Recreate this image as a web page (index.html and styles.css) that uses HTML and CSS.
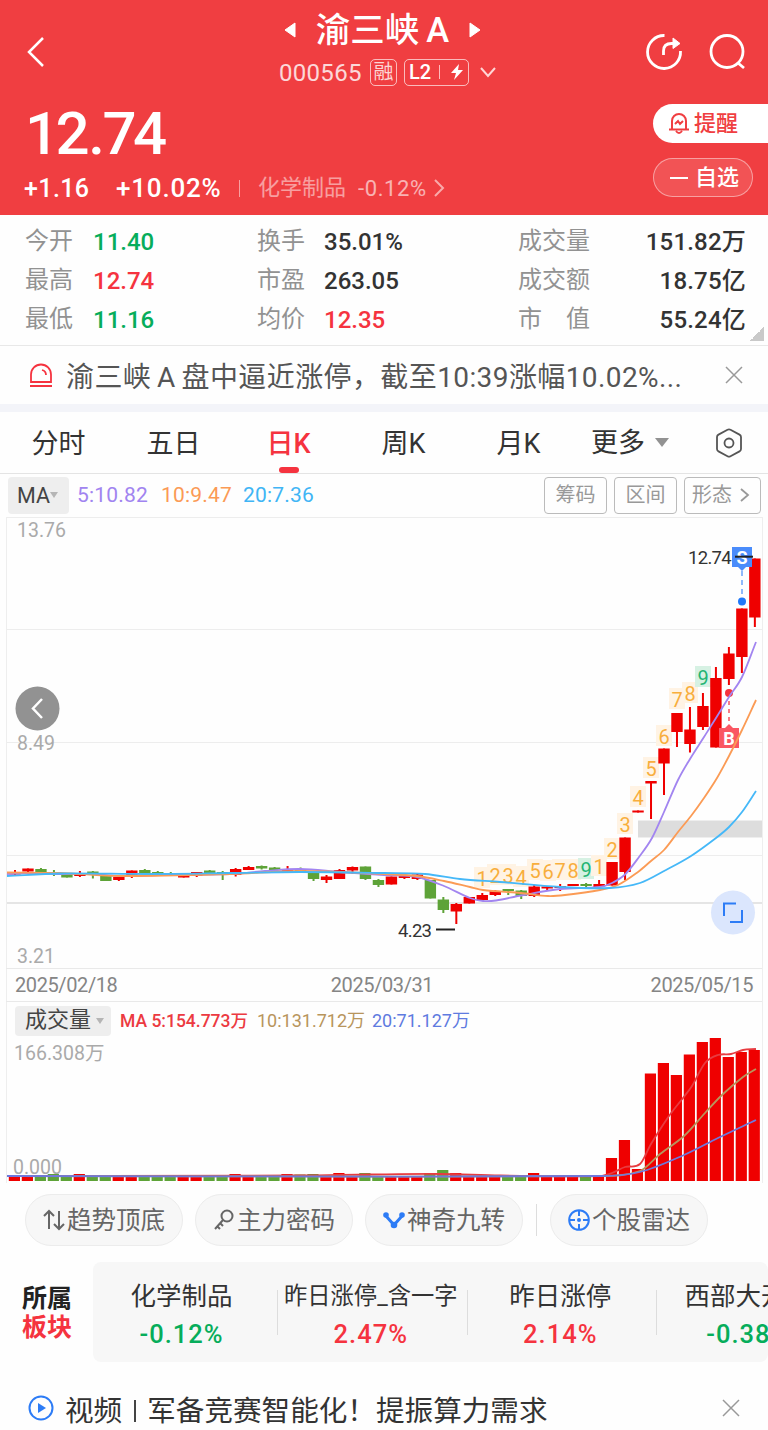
FILE: index.html
```html
<!doctype html>
<html lang="zh-CN">
<head>
    <meta charset="UTF-8">
    <title>渝三峡A 000565</title>
    <meta name="viewport" content="width=device-width, initial-scale=1">
    <link rel="stylesheet" href="styles.css">
</head>
<body>
    <header class="header">
        <div class="title-bar">
            <svg class="back" width="20" height="32" viewBox="0 0 20 32"><path d="M17 2 3 16l14 14"/></svg>
            <div class="title">
                <div class="name-row">
                    <svg width="12" height="16" viewBox="0 0 12 16"><path d="M11 1v14L1 8z"/></svg>
                    <h1>渝三峡<span>A</span></h1>
                    <svg width="12" height="16" viewBox="0 0 12 16"><path d="M1 1v14l10-7z"/></svg>
                </div>
                <div class="code-row">
                    <span class="code">000565</span>
                    <span class="badge rong">融</span>
                    <span class="badge level">L2<i></i><svg width="14" height="18" viewBox="0 0 14 18"><path d="M9 1 1 10h5l-2 7 9-10H8z"/></svg></span>
                    <svg class="down" width="16" height="12" viewBox="0 0 16 12"><path d="m1 2 7 8 7-8"/></svg>
                </div>
            </div>
            <div class="actions">
                <svg width="38" height="38" viewBox="0 0 38 38"><path d="M19.500 2.500A16.500 16.500 0 1 0 35.500 18"/><path d="M18.500 22v-4q0-7.500 8-7.500h5"/><path class="head" d="m28 5 7 5.500-7 5z"/></svg>
                <svg width="38" height="38" viewBox="0 0 38 38"><circle cx="19" cy="18.500" r="16"/><path d="m30 30 6 5"/></svg>
            </div>
        </div>
        <div class="quote">
            <div class="price-box">
                <div class="price">12<span>.</span>74</div>
                <div class="change">
                    <span>+1.16</span><span class="rate">+10.02%</span><i></i>
                    <span class="sector">化学制品</span><span class="sector-rate">-0.12%</span>
                    <svg width="12" height="18" viewBox="0 0 12 18"><path d="m2 1 8 8-8 8"/></svg>
                </div>
            </div>
            <div class="side">
                <div class="remind">
                    <svg width="22" height="23" viewBox="0 0 22 23"><path d="M4 17V9a7 7 0 0 1 14 0v8M1 17.500h20M8 19q3 4 6 0M7 12l3-3 2 3 3-3"/></svg><span>提醒</span>
                </div>
                <div class="watch"><i></i><span>自选</span></div>
            </div>
        </div>
    </header>

    <section class="stats">
        <span>今开</span><b class="green">11.40</b><span>换手</span><b>35.01%</b><span>成交量</span><b>151.82万</b>
        <span>最高</span><b class="red">12.74</b><span>市盈</span><b>263.05</b><span>成交额</span><b>18.75亿</b>
        <span>最低</span><b class="green">11.16</b><span>均价</span><b class="red">12.35</b><span>市　值</span><b>55.24亿</b>
        <i class="corner"></i>
    </section>

    <div class="notice">
        <svg width="24" height="25" viewBox="0 0 24 25"><path d="M2 19v-7.500a10 10 0 0 1 20 0V19zM1 23h22M13 7q4 1 4 5"/></svg>
        <p>渝三峡 A 盘中逼近涨停，截至10:39涨幅10.02%...</p>
        <svg class="close" width="18" height="18" viewBox="0 0 18 18"><path d="m1 1 16 16M17 1 1 17"/></svg>
    </div>

    <nav class="tabs">
        <a>分时</a><a>五日</a><a class="active">日K</a><a>周K</a><a>月K</a>
        <a class="more">更多<i></i></a>
        <svg width="28" height="30" viewBox="0 0 28 30"><path d="M12.500 1.800q1.500-.8 3 0l9 4.800q1.500.8 1.500 2.400v12q0 1.600-1.500 2.400l-9 4.800q-1.500.8-3 0l-9-4.800Q2 22.600 2 21V9q0-1.600 1.500-2.400z"/><circle cx="14" cy="15" r="4.500"/></svg>
    </nav>

    <div class="toolbar">
        <span class="select">MA<i></i></span>
        <span class="ma5">5:10.82</span><span class="ma10">10:9.47</span><span class="ma20">20:7.36</span>
        <div class="tools">
            <span>筹码</span><span>区间</span><span class="shape">形态<svg width="10" height="16" viewBox="0 0 10 16"><path d="m1 2 7 6-7 6"/></svg></span>
        </div>
    </div>

    <div class="charts">
        <svg id="kline" width="768" height="452" viewBox="0 516 768 452"></svg>
        <div class="dates"><span>2025/02/18</span><span>2025/03/31</span><span>2025/05/15</span></div>
        <div class="vol-head">
            <span class="select"><span>成交量</span><i></i></span>
            <span class="v5">MA 5:154.773万</span><span class="v10">10:131.712万</span><span class="v20">20:71.127万</span>
        </div>
        <svg id="volume" width="768" height="146" viewBox="0 1036 768 146"></svg>
    </div>

    <div class="pills">
        <div><svg width="22" height="24" viewBox="0 0 22 24"><path d="M6 21V3M1 8l5-5 5 5M16 3v18M11 16l5 5 5-5"/></svg><span>趋势顶底</span></div>
        <div><svg width="22" height="24" viewBox="0 0 22 24"><circle cx="14" cy="8" r="5.500"/><path d="M10 12 2 21M7 15l3 3M4 18l3 3"/></svg><span>主力密码</span></div>
        <div><svg class="blue" width="22" height="24" viewBox="0 0 22 24"><path class="thick" d="m3 8 8 9 8-9"/><circle class="dot" cx="3" cy="7" r="2.800"/><circle class="dot" cx="11" cy="17" r="3.300"/><circle class="dot" cx="19" cy="7" r="2.800"/></svg><span>神奇九转</span></div>
        <i></i>
        <div><svg class="blue" width="22" height="24" viewBox="0 0 22 24"><circle cx="11" cy="12" r="9.800"/><path d="M11 2v6M11 16v6M1 12h6M15 12h6"/><circle class="dot" cx="11" cy="12" r="2"/></svg><span>个股雷达</span></div>
    </div>

    <section class="sectors">
        <h2>所属<br><em>板块</em></h2>
        <div class="sector-list">
            <div><span>化学制品</span><b class="green">-0.12%</b></div>
            <div><span class="long">昨日涨停_含一字</span><b class="red">2.47%</b></div>
            <div><span>昨日涨停</span><b class="red">2.14%</b></div>
            <div><span>西部大开发</span><b class="green">-0.38%</b></div>
        </div>
    </section>

    <div class="video">
        <svg width="26" height="26" viewBox="0 0 26 26"><circle cx="13" cy="13" r="11.500"/><path d="M10 8v10l8-5z"/></svg>
        <p>视频<i></i>军备竞赛智能化！提振算力需求</p>
        <svg class="close" width="18" height="18" viewBox="0 0 18 18"><path d="m1 1 16 16M17 1 1 17"/></svg>
    </div>
    <script src="chart.js"></script>
</body>
</html>
```

FILE: styles.css
```css
* {
    box-sizing: border-box;
}
body {
    margin: 0;
    width: 768px;
    height: 1430px;
    overflow: hidden;
    background: #fefefe;
    color: #333;
    font-family: Roboto, "Noto Sans CJK SC", sans-serif;
}
h1, h2, p {
    margin: 0;
    font-weight: normal;
}
i, em {
    font-style: normal;
}
svg {
    display: block;
    flex: none;
    fill: none;
}
.red {
    color: #f5333f;
}
.green {
    color: #06ad5b;
}

/* header */
.header {
    height: 215px;
    background: #f03e41;
    color: #fff;
}
.title-bar {
    height: 96px;
    display: grid;
    grid-template-columns: 200px 1fr 200px;
}
.back {
    margin: 36px 0 0 26px;
    stroke: #fff;
    stroke-width: 2.5;
}
.title {
    padding-top: 8px;
}
.name-row {
    height: 44px;
    display: flex;
    align-items: center;
    justify-content: center;
    gap: 20px;
    padding-right: 3px;
}
.name-row svg {
    fill: #fff;
    stroke: #fff;
    stroke-linejoin: round;
}
.name-row h1 {
    font-size: 34.5px;
    line-height: 44px;
    font-weight: 500;
}
.name-row h1 span {
    margin-left: 7px;
}
.code-row {
    height: 40px;
    display: flex;
    align-items: center;
    padding-left: 79px;
}
.code {
    font-size: 24px;
    letter-spacing: 0.3px;
    opacity: .8;
    width: 91px;
    margin-top: 2px;
}
.badge {
    height: 27px;
    border: 1.5px solid rgba(255, 255, 255, .65);
    border-radius: 5px;
    line-height: 24px;
}
.rong {
    width: 27px;
    margin-right: 7px;
    text-align: center;
    font-size: 20px;
    line-height: 25px;
    color: #fcd5d5;
}
.level {
    width: 65px;
    display: flex;
    align-items: center;
    padding-left: 4px;
    font-size: 20px;
    font-weight: 500;
}
.level i {
    height: 14px;
    border-left: 1px solid #fbb;
    margin: 0 10px 0 8px;
}
.level svg {
    fill: #fff;
}
.down {
    margin-left: 11px;
    stroke: #ffd5d5;
    stroke-width: 2;
}
.actions {
    display: flex;
    gap: 25px;
    padding: 33px 0 0 77px;
}
.actions svg {
    stroke: #fff;
    stroke-width: 2.8;
}
.actions .head {
    fill: #fff;
    stroke-width: 1;
}
.quote {
    display: flex;
    justify-content: space-between;
}
.price-box {
    padding-left: 24px;
}
.price {
    height: 76px;
    padding-left: 1px;
    font-size: 60px;
    line-height: 76px;
    font-weight: 500;
    letter-spacing: -3.5px;
}
.price span {
    margin: 0 1px 0 2px;
}
.change {
    height: 32px;
    display: flex;
    align-items: center;
    font-size: 25px;
    font-weight: 500;
    white-space: nowrap;
}
.change span:first-child {
    width: 92px;
    letter-spacing: .4px;
}
.change .rate {
    width: 123px;
    font-size: 26px;
    letter-spacing: .8px;
}
.change i {
    height: 17px;
    border-left: 1.5px solid rgba(255, 255, 255, .5);
}
.change .sector {
    font-size: 22px;
    line-height: 28px;
    font-weight: 400;
    margin: 0 12px 0 18px;
    opacity: .5;
}
.change .sector-rate {
    font-size: 22px;
    font-weight: 400;
    letter-spacing: .6px;
    opacity: .6;
}
.change svg {
    margin-left: 6px;
    stroke: #f9aaaa;
    stroke-width: 2;
}
.side {
    width: 115px;
    padding-top: 8px;
}
.remind, .watch {
    height: 39px;
    display: flex;
    align-items: center;
    font-size: 22px;
    font-weight: 500;
}
.remind span, .watch span {
    line-height: 30px;
}
.remind {
    background: #fff;
    color: #f03e41;
    border-radius: 20px 0 0 20px;
    padding-left: 15px;
    gap: 4px;
}
.remind svg {
    stroke: #f03e41;
    stroke-width: 2;
}
.watch {
    width: 100px;
    margin-top: 15px;
    border: 1.5px solid rgba(255, 255, 255, .45);
    border-radius: 20px;
    background: #f25355;
    padding-left: 16px;
}
.watch i {
    width: 18px;
    border-top: 2.5px solid #fff;
    margin-right: 7px;
}

/* quote numbers */
.stats {
    position: relative;
    height: 131px;
    padding: 7px 22px 0 25px;
    display: grid;
    grid-template-columns: 68px 164px 67px 194px 100px 1fr;
    grid-auto-rows: 39px;
    line-height: 38px;
    font-size: 24px;
    border-bottom: 1px solid #e8e8e8;
}
.stats span {
    color: #929292;
}
.stats b {
    font-weight: 500;
    padding-top: 1px;
}
.stats b:nth-of-type(3n) {
    text-align: right;
    letter-spacing: .2px;
}
.corner {
    position: absolute;
    right: 4px;
    bottom: 4px;
    width: 14px;
    height: 14px;
    background: linear-gradient(135deg, transparent 50%, #c9c9c9 50%);
}
.notice {
    height: 66px;
    display: flex;
    align-items: center;
    padding: 0 25px 0 29px;
    border-bottom: 8px solid #f3f4f9;
}
.notice svg {
    stroke: #f5333f;
    stroke-width: 1.8;
}
.notice p, .video p {
    flex: 1;
    margin-left: 13px;
    font-size: 28px;
    white-space: nowrap;
}
.notice p {
    color: #555;
    letter-spacing: .4px;
    word-spacing: -1.5px;
}
.notice .close, .video .close {
    stroke: #999;
    stroke-width: 1.5;
}

/* tabs */
.tabs {
    height: 62px;
    display: flex;
    align-items: center;
    padding: 0 25px 0 1px;
    border-bottom: 1px solid #e4e4e4;
    font-size: 27px;
}
.tabs a {
    width: 115px;
    height: 61px;
    line-height: 64px;
    text-align: center;
}
.tabs .active {
    color: #f5333f;
    font-weight: 500;
}
.tabs .active::after {
    content: "";
    display: block;
    width: 20px;
    height: 6px;
    margin: -9px auto 0;
    border-radius: 3px;
    background: #f5333f;
}
.tabs .more {
    display: flex;
    align-items: center;
    padding-left: 15px;
    gap: 10px;
}
.tabs .more i {
    border: 7px solid transparent;
    border-top: 9px solid #929292;
    border-bottom: 0;
}
.tabs > svg {
    margin-left: auto;
    stroke: #555;
    stroke-width: 1.8;
}

/* indicator bar */
.toolbar {
    height: 42px;
    display: flex;
    align-items: center;
    padding: 0 7px 0 8px;
    font-size: 21px;
}
.select {
    display: flex;
    align-items: center;
    background: #eee;
    border-radius: 4px;
    color: #444;
}
.select i {
    border: 4.5px solid transparent;
    border-top: 6px solid #b5b5b5;
    border-bottom: 0;
}
.toolbar .select {
    width: 61px;
    height: 37px;
    padding-left: 9px;
    margin-right: 8px;
    font-size: 21.5px;
}
.ma5 {
    color: #a184f0;
    width: 84px;
    letter-spacing: .2px;
}
.ma10 {
    color: #fb9a55;
    width: 82px;
    letter-spacing: .2px;
}
.ma20 {
    color: #40b5f5;
    letter-spacing: .2px;
}
.tools {
    margin-left: auto;
    display: flex;
    gap: 7px;
}
.tools span {
    height: 37px;
    width: 63px;
    border: 1.5px solid #bbb;
    border-radius: 4px;
    color: #999;
    font-size: 20px;
    line-height: 35px;
    text-align: center;
}
.tools .shape {
    width: 77px;
    display: flex;
    align-items: center;
    padding-left: 7px;
    gap: 8px;
}
.tools svg {
    stroke: #999;
    stroke-width: 1.8;
}

/* charts */
.charts {
    height: 667px;
    background: linear-gradient(#eee, #eee) 6px 1px / 1px 100% no-repeat, linear-gradient(#eee, #eee) 762px 1px / 1px 100% no-repeat;
}
.charts text {
    font-size: 19.5px;
    fill: #aaa;
}
.grid {
    stroke: #ededed;
}
.zero {
    stroke: #ddd;
    stroke-width: 1.5;
}
.line {
    stroke-width: 1.8;
    stroke-linejoin: round;
}
.charts .tag {
    font-size: 20px;
    fill: #f8ae3c;
    text-anchor: middle;
}
.charts .tag.nine {
    fill: #24b574;
}
.charts .mark {
    font-size: 18.5px;
    fill: #333;
    letter-spacing: -.7px;
}
.charts .sign {
    fill: #fff;
    font-weight: 700;
    font-size: 18px;
    text-anchor: middle;
}
.dates {
    height: 34px;
    margin: 0 6px;
    padding: 0 9px;
    display: flex;
    justify-content: space-between;
    align-items: center;
    color: #858585;
    font-size: 20px;
    line-height: 34px;
    letter-spacing: -.4px;
    border-top: 1px solid #e9e9e9;
    border-bottom: 1px solid #e9e9e9;
}
.dates span:nth-child(2) {
    margin-right: 4px;
}
.vol-head {
    height: 34px;
    display: flex;
    align-items: center;
    padding: 3px 0 0 15px;
    font-size: 18px;
    white-space: nowrap;
}
.vol-head .select {
    width: 96px;
    height: 30px;
    margin-right: 9px;
    padding-left: 10px;
    font-size: 22px;
    gap: 5px;
}
.select span {
    line-height: 28px;
    margin-top: -2px;
}
.vol-head > span {
    line-height: 24px;
}
.v5 {
    color: #ec3a41;
    width: 137px;
    font-size: 17.5px;
    font-weight: 500;
}
.v10 {
    color: #b8955c;
    width: 115px;
}
.v20 {
    color: #5f7be0;
}

/* shortcuts */
.pills {
    height: 73px;
    display: flex;
    align-items: center;
    padding: 1px 0 0 25px;
    gap: 12px;
}
.pills div {
    width: 158px;
    height: 52px;
    display: flex;
    align-items: center;
    justify-content: center;
    border: 1.5px solid #ececec;
    border-radius: 26px;
    background: #f7f7f7;
    color: #666;
    font-size: 24.5px;
    gap: 2px;
}
.pills span {
    line-height: 34px;
    margin-top: 2px;
}
.pills svg {
    stroke: #666;
    stroke-width: 2;
}
.pills svg.blue {
    stroke: #2d7cf6;
}
.pills .thick {
    stroke-width: 3;
}
.pills .dot {
    fill: #2d7cf6;
    stroke: none;
}
.pills i {
    height: 32px;
    margin: 0 1px;
    border-left: 1px solid #ddd;
}
.sectors {
    display: flex;
    height: 106px;
    padding-top: 6px;
}
.sectors h2 {
    width: 93px;
    padding: 22px 0 0 22px;
    font-size: 25px;
    line-height: 29px;
    font-weight: 700;
    color: #222;
}
.sectors em {
    color: #f5333f;
}
.sector-list {
    flex: 1;
    display: flex;
    overflow: hidden;
    background: #f7f7f7;
    border-radius: 8px;
    height: 100px;
}
.sector-list div {
    flex: none;
    width: 189.5px;
    padding: 15px 2px 0 0;
    text-align: center;
    background: linear-gradient(#ddd, #ddd) 0 28px / 1px 45px no-repeat;
}
.sector-list div:first-child {
    width: 184px;
    background: none;
    padding-right: 7px;
}
.sector-list div:last-child {
    padding-right: 5px;
}
.sector-list span, .sector-list b {
    display: block;
    font-size: 25.5px;
    line-height: 38px;
    white-space: nowrap;
}
.sector-list .long {
    font-size: 23.3px;
}
.sector-list b {
    font-weight: 500;
    letter-spacing: 1px;
}
.video {
    height: 92px;
    display: flex;
    align-items: center;
    padding: 0 28px;
}
.video svg {
    stroke: #2d7cf6;
    stroke-width: 2;
}
.video svg path {
    fill: #2d7cf6;
    stroke: none;
}
.video p {
    margin-left: 11px;
    font-size: 28.6px;
}
.video p i {
    display: inline-block;
    width: 2px;
    height: 22px;
    margin: 0 11px 0 12px;
    vertical-align: -1px;
    background: #444;
}
.video svg.close path {
    stroke: #999;
}
```

FILE: chart.js
```js
const RED = '#ef0000';
const GREEN = '#5ea338';
const STEP = 12.98;

// [up, top, bottom, high, low]
const candles = [
    [1, 872, 874.5, 870, 876], [1, 868.5, 871.5, 868.5, 873], [0, 869, 874, 868, 875], [0, 872, 873.5, 870, 876],
    [0, 874, 877.5, 874, 877.5], [1, 873, 876, 871, 877], [0, 871.5, 875, 871, 878.5], [0, 876, 881, 876, 881],
    [1, 877, 880, 877, 881], [1, 870.5, 877, 870.5, 878], [0, 870, 873, 869, 873], [0, 872, 874, 871, 874],
    [0, 873, 876, 872, 876], [1, 874.5, 877.5, 874, 877.5], [1, 872, 876, 872, 877], [0, 870.5, 873, 870, 873],
    [0, 872, 874, 871, 880], [1, 869, 875, 868, 876.5], [1, 867, 870, 866, 870], [0, 866, 868.5, 865.5, 869.5],
    [0, 867.5, 870, 867, 870], [1, 869, 871, 866, 871], [0, 869, 871, 867.5, 871], [0, 873, 879, 873, 881],
    [1, 876.5, 880, 875, 883], [1, 870, 879, 869, 879], [1, 867, 870.5, 866.5, 874], [0, 866.5, 879, 866.5, 880],
    [0, 880, 885, 879, 887], [1, 876.5, 884.5, 876.5, 884.5], [1, 875.5, 878, 875, 879], [1, 874.5, 879, 873, 880],
    [0, 880, 898.5, 880, 898.5], [0, 899.5, 910, 897, 913], [1, 904, 911.5, 903, 924], [1, 897, 903.5, 897, 903.5],
    [1, 895, 900, 893, 901], [1, 891, 895, 890, 896], [0, 889, 891, 889, 895], [0, 890.5, 896, 890, 899],
    [1, 886.5, 896, 885, 897], [1, 886.5, 888.5, 886, 891], [1, 886, 888, 884, 891], [1, 884, 886, 884, 886],
    [0, 884, 886, 883, 887], [1, 884, 887, 880, 887], [1, 862, 885.5, 862, 885.5], [1, 837.5, 872, 837.5, 880],
    [1, 810.5, 812.5, 810.5, 812.5], [1, 781, 783.5, 781, 819], [1, 748.5, 763.5, 748.5, 795], [1, 713, 732, 713, 747],
    [1, 729.5, 744, 707, 752.5], [1, 706, 727, 693, 730], [1, 678, 747.5, 667, 747.5], [1, 653.5, 679, 647, 685],
    [1, 608.5, 657, 608.5, 673], [1, 558.5, 617.5, 558.5, 627]
];

const tags = [
    [482, 878, 1], [495, 875, 2], [508, 875, 3], [521, 877, 4], [535, 870, 5], [548, 871, 6], [560, 870, 7],
    [573, 870, 8], [586, 869, 9], [599, 866, 1], [612, 849, 2], [625, 824, 3], [638, 797, 4], [651, 768, 5],
    [664, 736, 6], [677, 699, 7], [690, 693, 8], [703, 677, 9]
];

const x = i => 15 + i * STEP;
const rect = (x, y, w, h, fill) => `<rect x="${x}" y="${y}" width="${w}" height="${h}" fill="${fill}"/>`;

// smooth curve through the points
function curve(points, color) {
    let d = `M${points[0]}`;
    for (let i = 0; i < points.length - 1; i++) {
        const a = points[i - 1] || points[i], b = points[i], c = points[i + 1], e = points[i + 2] || c;
        const k = (c[0] - b[0]) / 3;
        const s1 = (c[1] - a[1]) / (c[0] - a[0]);
        const s2 = (e[1] - b[1]) / (e[0] - b[0]);
        d += `C${b[0] + k} ${b[1] + s1 * k} ${c[0] - k} ${c[1] - s2 * k} ${c}`;
    }
    return `<path class="line" d="${d}" stroke="${color}"/>`;
}

function drawKline() {
    let s = '';
    [517, 629, 742, 855].forEach(y => s += `<path class="grid" d="M7 ${y}.5H762"/>`);
    s += '<path class="zero" d="M7 903H762"/>';
    s += rect(638, 820.5, 124, 17, '#ddd');
    s += '<text x="17" y="537">13.76</text><text x="17" y="750">8.49</text><text x="17" y="963">3.21</text>';
    tags.forEach(([tx, ty, n]) => {
        s += rect(tx - 8, ty - 11, 16, 21, n === 9 ? '#d6f1e3' : '#fff3e4');
    });
    candles.forEach(([up, top, bottom, high, low], i) => {
        const color = up ? RED : GREEN;
        s += rect(x(i) - 5.7, top, 11.4, bottom - top, color);
        s += rect(x(i) - 1, high, 2, low - high, color);
    });
    tags.forEach(([tx, ty, n]) => {
        s += `<text class="tag${n === 9 ? ' nine' : ''}" x="${tx}" y="${ty + 7.5}">${n}</text>`;
    });

    // buy and sell signs
    s += '<path d="M742 571v28" stroke="#6aa2fa" stroke-width="1.5" stroke-dasharray="5 4"/><circle cx="742" cy="601.5" r="4" fill="#1f78fa"/>';
    s += '<path d="M732 547h20v20h-6l-4 4-4-4h-6z" fill="#4a8cfb"/><text class="sign" x="742" y="564">S</text>';
    s += '<path d="M735 556.700h18" stroke="#222" stroke-width="2"/><text class="mark" x="688" y="564">12.74</text>';
    s += '<path d="M729 693v32" stroke="#f5525d" stroke-width="1.5" stroke-dasharray="4 4"/><circle cx="729" cy="693" r="4" fill="#f5333f"/>';
    s += '<path d="M719 728h6l4-4 4 4h6v20h-20z" fill="#fa5662"/><text class="sign" x="729" y="744.500">B</text>';
    s += '<path d="M436 929.500h19" stroke="#222" stroke-width="2"/><text class="mark" x="398" y="936.500">4.23</text>';

    s += curve([[7, 874], [30, 873], [60, 874], [90, 874], [120, 876], [160, 875], [230, 874], [265, 871], [300, 869], [340, 872], [384, 875], [417, 877], [444, 886], [470, 898], [483, 901], [496, 900.5], [521, 895.5], [560, 889], [600, 887], [612, 883], [625, 874.5], [639, 857], [652, 838], [664, 812], [678, 780], [690, 759], [704, 737], [716, 718], [729, 697], [742, 677], [756, 642]], '#a285f0');
    s += curve([[7, 872.5], [60, 873], [120, 876], [230, 874], [300, 871], [384, 874], [417, 876], [444, 881], [470, 887], [483, 890], [521, 893], [548, 896], [565, 895], [600, 890], [618, 885], [638, 872], [651, 861], [664, 850], [678, 832], [691, 816], [704, 798], [717, 778], [729, 756], [742, 730], [756, 700]], '#fb9b55');
    s += curve([[7, 876], [60, 873.5], [150, 874], [230, 873], [300, 872], [384, 873], [425, 874], [460, 879], [500, 882], [560, 887], [610, 888], [640, 883], [666, 870], [691, 856], [716, 838], [729, 827], [742, 812], [756, 791]], '#45b8f8');

    // full screen button
    s += '<circle cx="733" cy="912.500" r="22" fill="#dbe6fd"/><path d="M724 916v-12.500h12M742 910v12h-12" stroke="#2d7cf6" stroke-width="2"/>';
    // scroll back button
    s += '<circle cx="37.500" cy="708.500" r="22" fill="#929292"/><path d="m42 699-9 9.500 9 9.500" stroke="#fff" stroke-width="2.500"/>';
    document.getElementById('kline').innerHTML = s;
}

function drawVolume() {
    const base = 1181;
    const last = [1158, 1140, 1169, 1073.5, 1063, 1075, 1054.5, 1042, 1038, 1057, 1052, 1050];
    const high = { 3: 1174, 5: 1174, 17: 1174, 21: 1174, 22: 1174.5, 23: 1174, 25: 1173, 27: 1173, 32: 1173, 33: 1170, 34: 1173, 40: 1173 };
    let s = '<text x="14" y="1060">166.308万</text><text x="13" y="1174">0.000</text>';
    candles.forEach((c, i) => {
        const top = i >= 46 ? last[i - 46] : high[i] || 1176;
        s += rect(x(i) - 6.2, top, 11.2, base - top, c[0] ? RED : GREEN);
    });
    s += curve([[7, 1176], [300, 1175.5], [370, 1174.5], [440, 1174], [500, 1175.5], [600, 1176], [612, 1173], [625, 1167], [640, 1164], [651, 1144], [669, 1116], [683, 1098], [692, 1086], [705, 1063], [718, 1055], [731, 1054], [743, 1050], [756, 1049]], '#e83b40');
    s += curve([[7, 1176], [600, 1176], [640, 1171], [660, 1154], [684, 1136], [705, 1113], [722, 1095], [743, 1077], [756, 1069]], '#b8955c');
    s += curve([[7, 1176], [600, 1176], [640, 1172], [684, 1155], [718, 1138], [756, 1120]], '#6e78dc');
    document.getElementById('volume').innerHTML = s;
}

drawKline();
drawVolume();
```
